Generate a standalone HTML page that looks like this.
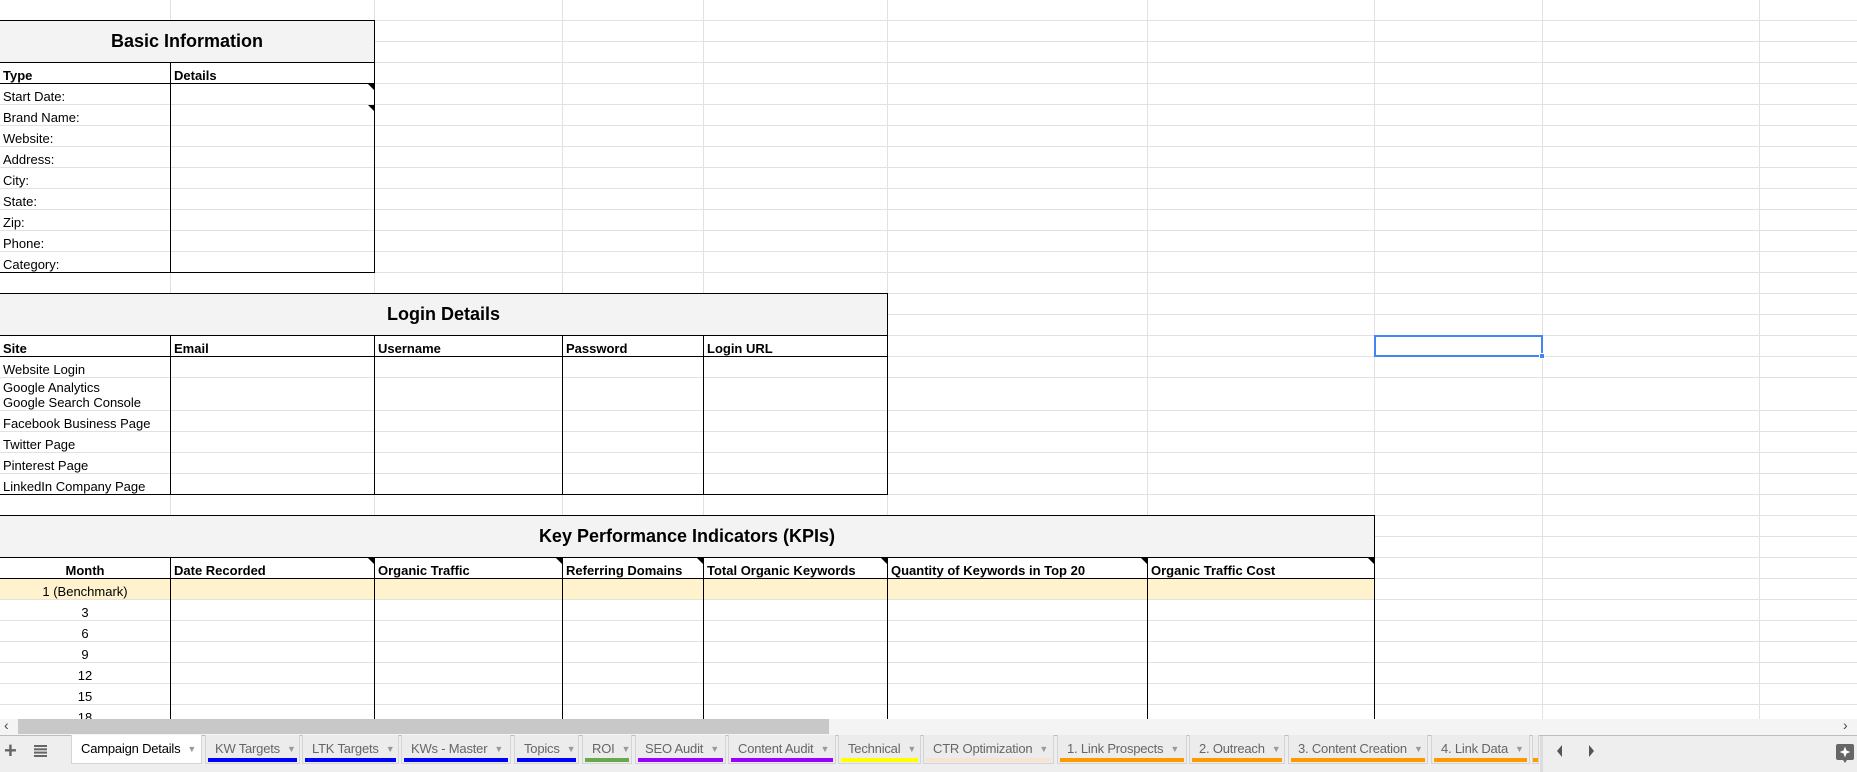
<!DOCTYPE html>
<html><head><meta charset="utf-8"><style>
*{margin:0;padding:0;box-sizing:border-box}
body{width:1857px;height:772px;overflow:hidden;background:#fff;font-family:"Liberation Sans",Arial,sans-serif;position:relative;color:#000}
.a{position:absolute}
.h{position:absolute;left:0;width:1857px;height:1px;background:#e2e2e2}
.v{position:absolute;top:0;height:719px;width:1px;background:#e2e2e2}
.bh{position:absolute;height:1px;background:#000}
.bv{position:absolute;width:1px;background:#000}
.t{position:absolute;font-size:13px;line-height:15px;white-space:nowrap}
.b{font-weight:bold}
.ttl{position:absolute;background:#f3f3f3;font-weight:bold;font-size:18px;text-align:center;line-height:42px}
.tri{position:absolute;width:0;height:0;border-top:6px solid #000;border-left:6px solid transparent}
.tab{position:absolute;top:735px;height:29px;background:#ececec;border:1px solid #d4d4d4;border-top:none;font-size:13px;color:#666;line-height:28px;padding-left:9px;white-space:nowrap;overflow:hidden;letter-spacing:-0.2px}
.tab i{font-style:normal;font-size:9px;color:#999;margin-left:7px;vertical-align:1px}
.tab u{position:absolute;left:2px;right:2px;bottom:1px;height:4px;text-decoration:none}
</style></head><body>

<div class="a" style="left:0;top:578px;width:1374px;height:21px;background:#fff2cc"></div>

<div class="h" style="top:20px"></div><div class="h" style="top:41px"></div><div class="h" style="top:62px"></div><div class="h" style="top:83px"></div><div class="h" style="top:104px"></div><div class="h" style="top:125px"></div><div class="h" style="top:146px"></div><div class="h" style="top:167px"></div><div class="h" style="top:188px"></div><div class="h" style="top:209px"></div><div class="h" style="top:230px"></div><div class="h" style="top:251px"></div><div class="h" style="top:272px"></div><div class="h" style="top:293px"></div><div class="h" style="top:314px"></div><div class="h" style="top:335px"></div><div class="h" style="top:356px"></div><div class="h" style="top:377px"></div><div class="h" style="top:410px"></div><div class="h" style="top:431px"></div><div class="h" style="top:452px"></div><div class="h" style="top:473px"></div><div class="h" style="top:494px"></div><div class="h" style="top:515px"></div><div class="h" style="top:536px"></div><div class="h" style="top:557px"></div><div class="h" style="top:578px"></div><div class="h" style="top:599px"></div><div class="h" style="top:620px"></div><div class="h" style="top:641px"></div><div class="h" style="top:662px"></div><div class="h" style="top:683px"></div><div class="h" style="top:704px"></div>
<div class="v" style="left:170px"></div><div class="v" style="left:374px"></div><div class="v" style="left:562px"></div><div class="v" style="left:703px"></div><div class="v" style="left:887px"></div><div class="v" style="left:1147px"></div><div class="v" style="left:1374px"></div><div class="v" style="left:1542px"></div><div class="v" style="left:1759px"></div>

<div class="ttl" style="left:0;top:20px;width:374px;height:42px">Basic Information</div>
<div class="bh" style="left:0;top:20px;width:375px"></div>
<div class="bh" style="left:0;top:62px;width:375px"></div>
<div class="bh" style="left:0;top:83px;width:375px"></div>
<div class="bh" style="left:0;top:272px;width:375px"></div>
<div class="bv" style="left:374px;top:20px;height:253px"></div>
<div class="bv" style="left:170px;top:62px;height:210px"></div>
<div class="tri" style="left:368px;top:84px"></div>
<div class="tri" style="left:368px;top:105px"></div>
<div class="t b" style="left:3px;top:68px">Type</div>
<div class="t b" style="left:174px;top:68px">Details</div>
<div class="t" style="left:3px;top:89px">Start Date:</div>
<div class="t" style="left:3px;top:110px">Brand Name:</div>
<div class="t" style="left:3px;top:131px">Website:</div>
<div class="t" style="left:3px;top:152px">Address:</div>
<div class="t" style="left:3px;top:173px">City:</div>
<div class="t" style="left:3px;top:194px">State:</div>
<div class="t" style="left:3px;top:215px">Zip:</div>
<div class="t" style="left:3px;top:236px">Phone:</div>
<div class="t" style="left:3px;top:257px">Category:</div>

<div class="ttl" style="left:0;top:293px;width:887px;height:42px">Login Details</div>
<div class="bh" style="left:0;top:293px;width:888px"></div>
<div class="bh" style="left:0;top:335px;width:888px"></div>
<div class="bh" style="left:0;top:356px;width:888px"></div>
<div class="bh" style="left:0;top:494px;width:888px"></div>
<div class="bv" style="left:887px;top:293px;height:202px"></div>
<div class="bv" style="left:170px;top:335px;height:159px"></div>
<div class="bv" style="left:374px;top:335px;height:159px"></div>
<div class="bv" style="left:562px;top:335px;height:159px"></div>
<div class="bv" style="left:703px;top:335px;height:159px"></div>
<div class="t b" style="left:3px;top:341px">Site</div>
<div class="t b" style="left:174px;top:341px">Email</div>
<div class="t b" style="left:378px;top:341px">Username</div>
<div class="t b" style="left:566px;top:341px">Password</div>
<div class="t b" style="left:707px;top:341px">Login URL</div>
<div class="t" style="left:3px;top:362px">Website Login</div>
<div class="t" style="left:3px;top:380px">Google Analytics</div>
<div class="t" style="left:3px;top:395px">Google Search Console</div>
<div class="t" style="left:3px;top:416px">Facebook Business Page</div>
<div class="t" style="left:3px;top:437px">Twitter Page</div>
<div class="t" style="left:3px;top:458px">Pinterest Page</div>
<div class="t" style="left:3px;top:479px">LinkedIn Company Page</div>

<div class="ttl" style="left:0;top:515px;width:1374px;height:42px">Key Performance Indicators (KPIs)</div>
<div class="bh" style="left:0;top:515px;width:1375px"></div>
<div class="bh" style="left:0;top:557px;width:1375px"></div>
<div class="bh" style="left:0;top:578px;width:1375px"></div>
<div class="bv" style="left:1374px;top:515px;height:204px"></div>
<div class="bv" style="left:170px;top:557px;height:162px"></div>
<div class="bv" style="left:374px;top:557px;height:162px"></div>
<div class="bv" style="left:562px;top:557px;height:162px"></div>
<div class="bv" style="left:703px;top:557px;height:162px"></div>
<div class="bv" style="left:887px;top:557px;height:162px"></div>
<div class="bv" style="left:1147px;top:557px;height:162px"></div>
<div class="tri" style="left:368px;top:558px"></div>
<div class="tri" style="left:556px;top:558px"></div>
<div class="tri" style="left:697px;top:558px"></div>
<div class="tri" style="left:881px;top:558px"></div>
<div class="tri" style="left:1141px;top:558px"></div>
<div class="tri" style="left:1368px;top:558px"></div>
<div class="t b" style="left:0;width:170px;text-align:center;top:563px">Month</div>
<div class="t b" style="left:174px;top:563px">Date Recorded</div>
<div class="t b" style="left:378px;top:563px">Organic Traffic</div>
<div class="t b" style="left:566px;top:563px">Referring Domains</div>
<div class="t b" style="left:707px;top:563px">Total Organic Keywords</div>
<div class="t b" style="left:891px;top:563px">Quantity of Keywords in Top 20</div>
<div class="t b" style="left:1151px;top:563px">Organic Traffic Cost</div>
<div class="t" style="left:0;width:170px;text-align:center;top:584px">1 (Benchmark)</div>
<div class="t" style="left:0;width:170px;text-align:center;top:605px">3</div>
<div class="t" style="left:0;width:170px;text-align:center;top:626px">6</div>
<div class="t" style="left:0;width:170px;text-align:center;top:647px">9</div>
<div class="t" style="left:0;width:170px;text-align:center;top:668px">12</div>
<div class="t" style="left:0;width:170px;text-align:center;top:689px">15</div>
<div class="t" style="left:0;width:170px;text-align:center;top:710px">18</div>

<div class="a" style="left:1374px;top:335px;width:169px;height:22px;border:2px solid #4285f4"></div>
<div class="a" style="left:1539px;top:353px;width:6px;height:6px;background:#4285f4;border:1px solid #fff"></div>

<div class="a" style="left:0;top:719px;width:1857px;height:16px;background:#f4f4f4"></div>
<div class="a" style="left:18px;top:719px;width:811px;height:15px;background:#c8c8c8"></div>
<div class="a" style="left:4px;top:717px;font-size:14px;color:#444">‹</div>
<div class="a" style="left:1843px;top:717px;font-size:14px;color:#444">›</div>

<div class="a" style="left:0;top:735px;width:1857px;height:37px;background:#eeeeee;border-top:1px solid #bdbdbd"></div>
<div class="a" style="left:4px;top:738px;font-size:22px;color:#666;font-weight:bold">+</div>
<svg class="a" style="left:34px;top:745px" width="13" height="12"><rect x="0" y="0" width="13" height="2" fill="#666"/><rect x="0" y="3.3" width="13" height="2" fill="#666"/><rect x="0" y="6.6" width="13" height="2" fill="#666"/><rect x="0" y="10" width="13" height="2" fill="#666"/></svg>

<div class="tab" style="left:71px;width:131px;background:#fff;color:#000;border-color:#d4d4d4">Campaign Details<i>▼</i></div>
<div class="tab" style="left:205px;width:95px">KW Targets<i>▼</i><u style="background:#0000ff"></u></div>
<div class="tab" style="left:302px;width:97px">LTK Targets<i>▼</i><u style="background:#0000ff"></u></div>
<div class="tab" style="left:401px;width:110px">KWs - Master<i>▼</i><u style="background:#0000ff"></u></div>
<div class="tab" style="left:514px;width:65px">Topics<i>▼</i><u style="background:#0000ff"></u></div>
<div class="tab" style="left:582px;width:50px">ROI<i>▼</i><u style="background:#6aa84f"></u></div>
<div class="tab" style="left:635px;width:91px">SEO Audit<i>▼</i><u style="background:#9900ff"></u></div>
<div class="tab" style="left:728px;width:108px">Content Audit<i>▼</i><u style="background:#9900ff"></u></div>
<div class="tab" style="left:838px;width:83px">Technical<i>▼</i><u style="background:#ffff00"></u></div>
<div class="tab" style="left:923px;width:131px">CTR Optimization<i>▼</i><u style="background:#f6e3d0"></u></div>
<div class="tab" style="left:1057px;width:130px">1. Link Prospects<i>▼</i><u style="background:#ff9900"></u></div>
<div class="tab" style="left:1189px;width:96px">2. Outreach<i>▼</i><u style="background:#ff9900"></u></div>
<div class="tab" style="left:1288px;width:140px">3. Content Creation<i>▼</i><u style="background:#ff9900"></u></div>
<div class="tab" style="left:1431px;width:99px">4. Link Data<i>▼</i><u style="background:#ff9900"></u></div>
<div class="tab" style="left:1532px;width:7px;padding:0"><u style="background:#ff9900;left:0;right:0"></u></div>
<div class="a" style="left:1540px;top:736px;width:3px;height:36px;background:#ddd"></div>
<svg class="a" style="left:1556px;top:745px" width="40" height="12"><path d="M6 0 L1 6 L6 12Z" fill="#555"/><path d="M33 0 L38 6 L33 12Z" fill="#555"/></svg>
<svg class="a" style="left:1836px;top:744px" width="18" height="20"><rect x="0" y="0" width="18" height="16" rx="2" fill="#666"/><path d="M7 16 L9 19 L11 16Z" fill="#666"/><path d="M9 2.5 L10.5 6.5 L14.5 8 L10.5 9.5 L9 13.5 L7.5 9.5 L3.5 8 L7.5 6.5Z" fill="#fff"/></svg>
</body></html>
